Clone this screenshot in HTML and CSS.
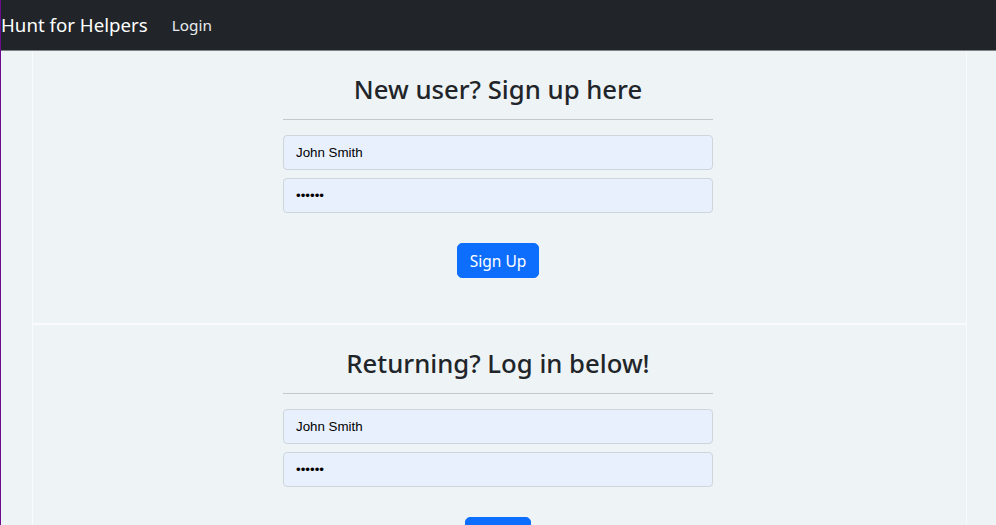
FILE: index.html
```html
<!DOCTYPE html>
<html>
<head>
<meta charset="utf-8">
<link rel="stylesheet" href="styles.css">
</head>
<body>
<nav class="navbar">
  <a class="brand" href="#">Hunt for Helpers</a>
  <a class="nav-link" href="#">Login</a>
</nav>
<main class="page">
  <section class="card card-top">
    <form class="auth-form">
      <h3 class="title">New user? Sign up here</h3>
      <hr class="rule">
      <input class="field" type="text" value="John Smith">
      <input class="field" type="password" value="secret">
      <div class="actions"><button class="btn" type="button">Sign Up</button></div>
    </form>
  </section>
  <section class="card card-bottom">
    <form class="auth-form">
      <h3 class="title">Returning? Log in below!</h3>
      <hr class="rule">
      <input class="field" type="text" value="John Smith">
      <input class="field" type="password" value="secret">
      <div class="actions"><button class="btn" type="button">Login</button></div>
    </form>
  </section>
</main>
</body>
</html>
```
FILE: styles.css
```css
html, body {
  margin: 0;
  height: 100%;
}
body {
  border-left: 1px solid #6e0a8c;
  background: #eef3f6;
  font-family: "Noto Sans", "Open Sans", sans-serif;
  color: #212529;
  overflow: hidden;
}
.navbar {
  height: 50px;
  background: #212529;
  border-bottom: 1px solid #7d8287;
  display: flex;
  align-items: center;
}
.brand {
  color: #fff;
  text-decoration: none;
  font-size: 18.7px;
  margin-left: 0;
  margin-right: 24px;
  padding-bottom: 1px;
}
.nav-link {
  color: #e9ecef;
  text-decoration: none;
  font-size: 15.3px;
}
.page {
  padding: 0 29px 0 31px;
}
.card {
  border-left: 1px solid #f8fafb;
  border-right: 1px solid #f8fafb;
  padding-right: 3px;
}
.card-top {
  border-bottom: 2px solid #f8fafb;
  height: 272px;
}
.card-bottom {
  height: 300px;
}
.auth-form {
  width: 430px;
  margin: 0 auto;
  padding-top: 23px;
  display: flex;
  flex-direction: column;
}
.title {
  margin: 0;
  font-size: 25.7px;
  font-weight: 500;
  line-height: 32px;
  text-align: center;
}
.rule {
  margin: 13px 0 15px;
  border: 0;
  border-top: 1px solid #c4c8cb;
}
.field {
  box-sizing: border-box;
  height: 35px;
  margin: 0 0 8px;
  padding: 0 12px;
  border: 1px solid #cfd5dc;
  border-radius: 4px;
  background: #e8f0fe;
  font-family: "Liberation Sans", Arial, sans-serif;
  font-size: 13.33px;
  color: #000;
}
.actions {
  display: flex;
  justify-content: center;
  margin-top: 22px;
}
.btn {
  height: 35px;
  padding: 0 12px;
  border: 1px solid #0d6efd;
  border-radius: 5px;
  background: #0d6efd;
  color: #fff;
  font-family: "Noto Sans", "Open Sans", sans-serif;
  font-size: 15.5px;
}
```
